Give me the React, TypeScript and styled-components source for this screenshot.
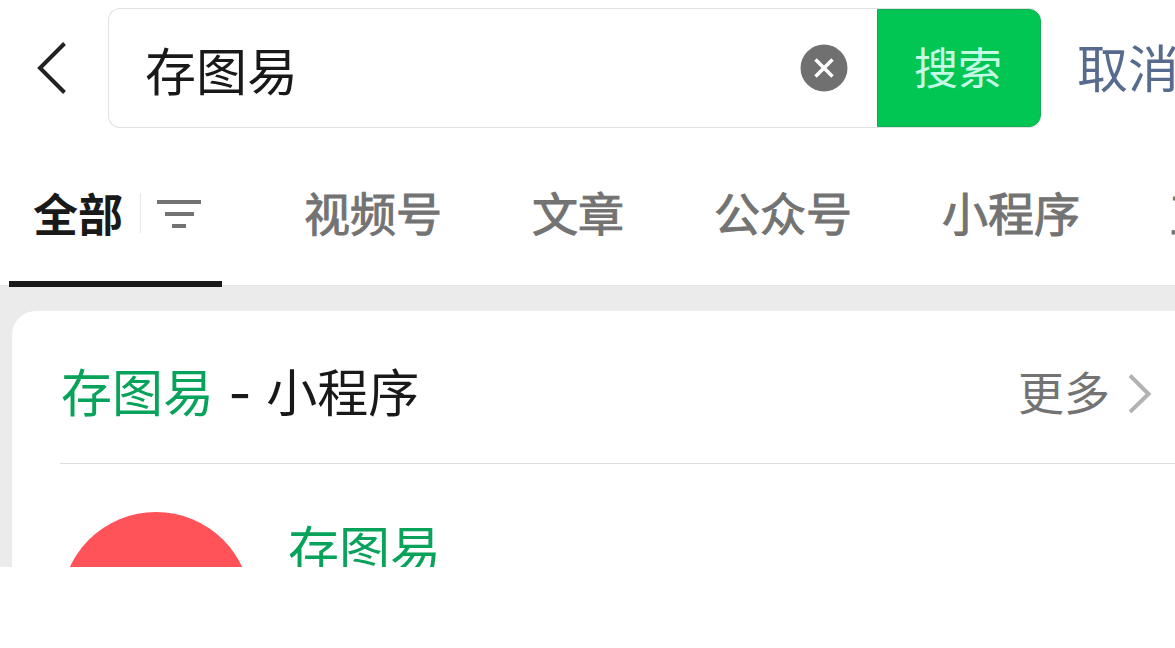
import React, { useState } from "react";
import styled, { createGlobalStyle } from "styled-components";

const GlobalStyle = createGlobalStyle`
  * { box-sizing: border-box; }
  body {
    margin: 0;
    background: #fff;
    color: #191919;
    font-family: "Noto Sans CJK SC", sans-serif;
    overflow-x: hidden;
  }
  button, input { font: inherit; color: inherit; }
  button { border: 0; padding: 0; background: none; cursor: pointer; }
`;

const Page = styled.div`
  width: 100%;
  overflow: hidden;
`;

const Header = styled.header`
  display: flex;
  padding-top: 8px;
`;

const BackButton = styled.button`
  flex: none;
  width: 108px;
  padding-left: 36px;
  display: flex;
  align-items: center;
`;

const SearchForm = styled.form`
  flex: 1;
  min-width: 0;
  height: 120px;
  display: flex;
  align-items: center;
  border: 1px solid #e2e2e2;
  border-right: 0;
  border-radius: 12px;
`;

const SearchInput = styled.input`
  flex: 1;
  min-width: 0;
  height: 100%;
  border: 0;
  outline: 0;
  background: none;
  padding: 2px 0 0 36px;
  font-size: 51px;
`;

const ClearButton = styled.button`
  flex: none;
  display: flex;
  margin-right: 29px;
`;

const SearchButton = styled.button`
  flex: none;
  width: 164px;
  height: 100%;
  padding: 0 2px 4px 0;
  border: 1px solid #0fae54;
  border-radius: 0 12px 12px 0;
  background: #02c653;
  color: #c4fbe4;
  font-size: 44px;
`;

const CancelButton = styled.button`
  flex: none;
  width: 134px;
  padding: 0 0 4px 36px;
  overflow: hidden;
  white-space: nowrap;
  text-align: left;
  color: #576b8f;
  font-size: 51px;
`;

const Tabs = styled.nav`
  display: flex;
  gap: 90px;
  height: 159px;
  margin-bottom: -2px;
  padding-left: 9px;
  position: relative;
  white-space: nowrap;
`;

const ActiveTab = styled.div`
  flex: none;
  width: 213px;
  margin-right: -8px;
  padding: 16px 21px 0 24px;
  display: flex;
  align-items: center;
  justify-content: space-between;
  border-bottom: 6px solid #191919;
`;

const Tab = styled.button<{ $active?: boolean }>`
  flex: none;
  padding: ${(p) => (p.$active ? 0 : "10px 0 4px")};
  font-size: ${(p) => (p.$active ? 45 : 46)}px;
  font-weight: ${(p) => (p.$active ? 700 : 400)};
  color: ${(p) => (p.$active ? "#191919" : "#737373")};
  -webkit-text-stroke: ${(p) => (p.$active ? 0 : "1px #737373")};
`;

const Divider = styled.span`
  width: 1px;
  height: 40px;
  background: #e6e6e6;
`;

const FilterButton = styled.button`
  display: flex;
`;

const Results = styled.main`
  padding: 25px 0 0 12px;
  border-top: 1px solid #e2e2e2;
  background: #ebebeb;
`;

const Card = styled.section`
  padding-left: 48px;
  border-top-left-radius: 24px;
  background: #fff;
`;

const CardHeader = styled.div`
  display: flex;
  align-items: center;
  justify-content: space-between;
  height: 153px;
  padding: 6px 23px 0 1px;
  border-bottom: 1px solid #dedede;
`;

const Title = styled.h2`
  margin: 0;
  font-family: "Inter", "Noto Sans CJK SC", sans-serif;
  font-size: 51px;
  font-weight: 400;
`;

const Keyword = styled.span`
  color: #07a35a;
`;

const MoreLink = styled.a`
  display: flex;
  align-items: center;
  gap: 18px;
  color: #737373;
  font-size: 46px;
  text-decoration: none;
`;

const ResultRow = styled.a`
  display: flex;
  gap: 37px;
  height: 103px;
  padding: 48px 0 0 1px;
  overflow: hidden;
  color: inherit;
  text-decoration: none;
`;

const Avatar = styled.span`
  flex: none;
  width: 190px;
  height: 190px;
  border-radius: 50%;
  background: #ff5259;
`;

const ResultName = styled.span`
  font-size: 51px;
  line-height: 70px;
`;

const tabs = ["视频号", "文章", "公众号", "小程序", "直播"];

export default function App() {
  const [query, setQuery] = useState("存图易");

  return (
    <Page>
      <GlobalStyle />
      <Header>
        <BackButton aria-label="返回">
          <svg width="32" height="52" viewBox="0 0 32 52" fill="none" stroke="#222" strokeWidth="4">
            <path d="M28.500 1.500 4 26l24.500 24.500" />
          </svg>
        </BackButton>
        <SearchForm onSubmit={(e) => e.preventDefault()}>
          <SearchInput aria-label="搜索内容" value={query} onChange={(e) => setQuery(e.target.value)} />
          <ClearButton type="button" aria-label="清除" onClick={() => setQuery("")}>
            <svg width="48" height="48" viewBox="0 0 48 48" fill="none">
              <circle cx="24" cy="24" r="23.500" fill="#707070" />
              <path d="M15.500 15.500 32.500 32.500M32.500 15.500 15.500 32.500" stroke="#fff" strokeWidth="3.500" />
            </svg>
          </ClearButton>
          <SearchButton type="submit">搜索</SearchButton>
        </SearchForm>
        <CancelButton>取消</CancelButton>
      </Header>
      <Tabs>
        <ActiveTab>
          <Tab $active>全部</Tab>
          <Divider />
          <FilterButton aria-label="筛选">
            <svg width="44" height="30" viewBox="0 0 44 30" fill="#737373">
              <path d="M0 2h44v4H0zM8 14h29v4H8zM15 26h14v4H15z" />
            </svg>
          </FilterButton>
        </ActiveTab>
        {tabs.map((name) => (
          <Tab key={name}>{name}</Tab>
        ))}
      </Tabs>
      <Results>
        <Card>
          <CardHeader>
            <Title>
              <Keyword>存图易</Keyword> - 小程序
            </Title>
            <MoreLink href="#more">
              更多
              <svg width="24" height="46" viewBox="0 0 24 46" fill="none" stroke="#b2b2b2" strokeWidth="4">
                <path d="M2 8.500 20.500 27 2 45" />
              </svg>
            </MoreLink>
          </CardHeader>
          <ResultRow href="#result">
            <Avatar />
            <ResultName>
              <Keyword>存图易</Keyword>
            </ResultName>
          </ResultRow>
        </Card>
      </Results>
    </Page>
  );
}
